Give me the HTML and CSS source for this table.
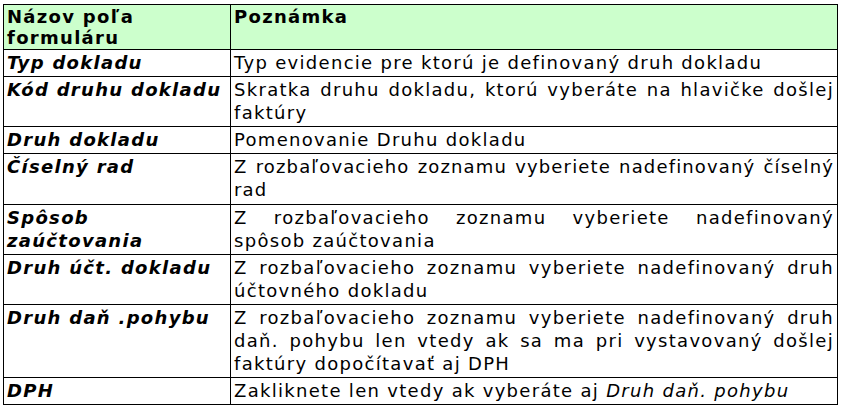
FILE: index.html
```html
<!DOCTYPE html>
<html lang="sk">
<head>
<meta charset="utf-8">
<title>Polia formulára</title>
<link rel="stylesheet" href="styles.css">
</head>
<body>
<table class="grid">
  <colgroup>
    <col class="c-name">
    <col class="c-note">
  </colgroup>
  <thead>
    <tr class="head">
      <th>Názov poľa formuláru</th>
      <th>Poznámka</th>
    </tr>
  </thead>
  <tbody>
    <tr>
      <td class="name">Typ dokladu</td>
      <td class="note">Typ evidencie pre ktorú je definovaný druh dokladu</td>
    </tr>
    <tr>
      <td class="name">Kód druhu dokladu</td>
      <td class="note">Skratka druhu dokladu, ktorú vyberáte na hlavičke došlej faktúry</td>
    </tr>
    <tr>
      <td class="name">Druh dokladu</td>
      <td class="note">Pomenovanie Druhu dokladu</td>
    </tr>
    <tr>
      <td class="name">Číselný rad</td>
      <td class="note snug">Z rozbaľovacieho zoznamu vyberiete nadefinovaný číselný rad</td>
    </tr>
    <tr>
      <td class="name">Spôsob zaúčtovania</td>
      <td class="note"><span class="line-full">Z rozbaľovacieho zoznamu vyberiete nadefinovaný</span> spôsob zaúčtovania</td>
    </tr>
    <tr>
      <td class="name">Druh účt. dokladu</td>
      <td class="note">Z rozbaľovacieho zoznamu vyberiete nadefinovaný druh účtovného dokladu</td>
    </tr>
    <tr>
      <td class="name">Druh daň .pohybu</td>
      <td class="note">Z rozbaľovacieho zoznamu vyberiete nadefinovaný druh daň. pohybu len vtedy ak sa ma pri vystavovaný došlej faktúry dopočítavať aj DPH</td>
    </tr>
    <tr>
      <td class="name">DPH</td>
      <td class="note">Zakliknete len vtedy ak vyberáte aj <em>Druh daň. pohybu</em></td>
    </tr>
  </tbody>
</table>
</body>
</html>
```

FILE: styles.css
```css
html, body {
  margin: 0;
  padding: 0;
  background: #ffffff;
}
body {
  padding: 4px 0 0 3px;
  font-family: "DejaVu Sans", Verdana, sans-serif;
  font-size: 18px;
  letter-spacing: 1.3px;
  color: #000000;
}
.grid {
  border-collapse: collapse;
  width: 835px;
  table-layout: fixed;
}
.c-name { width: 227px; }
.grid th,
.grid td {
  border: 1px solid #000000;
  vertical-align: top;
  text-align: left;
}
.grid th {
  line-height: 21px;
  padding: 1px 3px 1px 3px;
}
.grid td {
  line-height: 23.1px;
  padding: 1px 3px 2px 3px;
}
.head th {
  background: #ccffcc;
  font-weight: bold;
}
.name {
  font-weight: bold;
  font-style: italic;
}
.grid td.note {
  text-align: justify;
}
.grid td.snug {
  letter-spacing: 1.15px;
}
.line-full {
  display: block;
  text-align-last: justify;
}
.note em {
  font-style: italic;
}
```
